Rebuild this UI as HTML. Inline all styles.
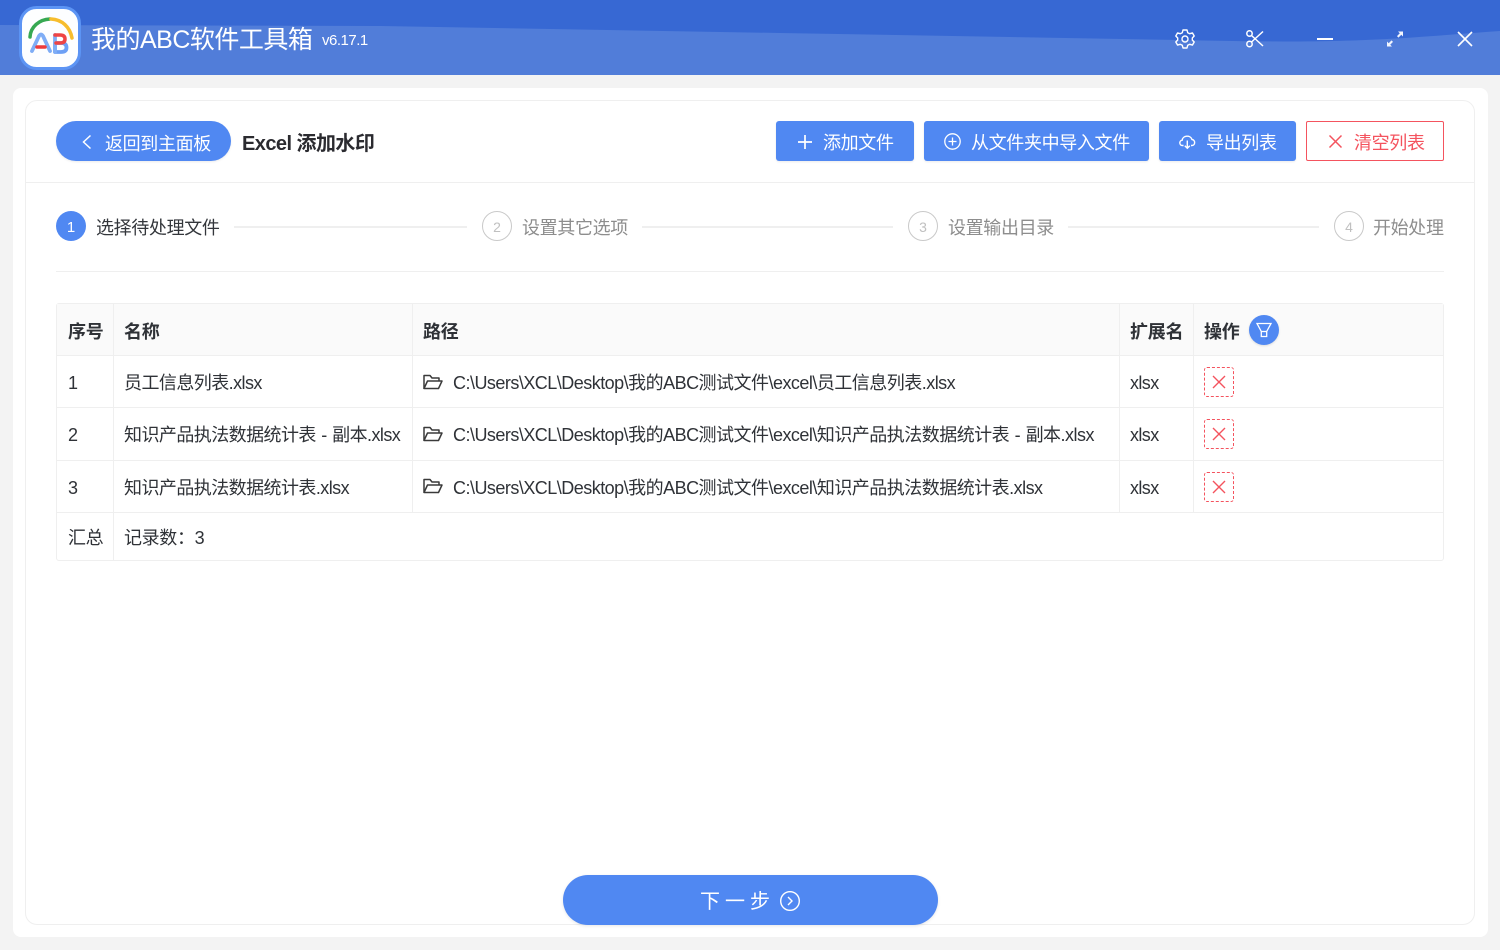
<!DOCTYPE html>
<html lang="zh">
<head>
<meta charset="utf-8">
<title>我的ABC软件工具箱</title>
<style>
html,body{margin:0;padding:0;width:1500px;height:950px;overflow:hidden;background:#f3f3f3}
*{box-sizing:border-box}
body{font-family:"Liberation Sans","Noto Sans CJK SC",sans-serif;color:#2f3237;position:relative}
.a{position:absolute;white-space:nowrap}
.t{font-size:18px;line-height:24px;letter-spacing:-.35px;font-weight:400}
.p{letter-spacing:-.52px}
.n{letter-spacing:-.56px}
.x{letter-spacing:-.6px}
.w{word-spacing:1px}
.btn{position:absolute;top:121px;height:40px;background:#5088f2;border-radius:3px;color:#fff;box-shadow:0 1px 2px rgba(0,0,0,.08)}
.btn span{position:absolute;top:10px;font-size:18px;line-height:24px;letter-spacing:-.35px;white-space:nowrap}
.line{position:absolute;background:#efefef}
.circ{position:absolute;top:211px;width:30px;height:30px;border-radius:50%;border:1px solid #c9c9c9;color:#c0c0c0;font-size:14px;line-height:31px;text-align:center}
.gray{color:#8d8d8d}
.b{font-weight:700;letter-spacing:-.2px}
.del{position:absolute;left:1204px;width:30px;height:30px;border:1px dashed #f4535e;border-radius:3px}
.del svg{position:absolute;left:6px;top:6px}
</style>
</head>
<body>
<!-- header -->
<svg class="a" style="left:0;top:0" width="1500" height="75" viewBox="0 0 1500 75">
<rect width="1500" height="75" fill="#517dd9"/>
<path d="M0 0H1500V31C1440 35 1390 41 1300 41.500C1260 41.500 1220 41 1180 40L780 33L380 26L0 25Z" fill="#3768d3"/>
</svg>
<!-- logo -->
<svg class="a" style="left:19px;top:6px" width="62" height="64" viewBox="0 0 62 64" fill="none">
<rect x="1.500" y="1.500" width="59" height="61" rx="16" fill="#fdfeff" stroke="#5c94f4" stroke-width="3"/>
<path d="M11 31C11.500 21 20 13.500 31 13" stroke="#36a852" stroke-width="3.500" stroke-linecap="round"/>
<path d="M32 13C43 13.500 51 21 53 32" stroke="#f7bd2d" stroke-width="3.500" stroke-linecap="round"/>
<path d="M13 45L20 30Q22 27 24 30L31 45" stroke="#7fadf6" stroke-width="3.800" stroke-linecap="round"/>
<path d="M18 41H26" stroke="#ee3b3b" stroke-width="3.500" stroke-linecap="round"/>
<path d="M36 37H42Q47.500 37 47.500 41.500Q47.500 46 42 46H36Z" stroke="#6da0f5" stroke-width="3.800" stroke-linejoin="round"/>
<path d="M36 29V46" stroke="#7fadf6" stroke-width="3.800" stroke-linecap="round"/>
<path d="M36 29H41Q46 29 46 33Q46 37 41 37H37" stroke="#ef4444" stroke-width="3.500" stroke-linecap="round"/>
</svg>
<div class="a" style="left:91px;top:23px;font-size:25px;line-height:34px;color:#fff;letter-spacing:-.5px">我的ABC软件工具箱</div>
<div class="a" style="left:322px;top:31px;font-size:15px;line-height:20px;color:#fff;letter-spacing:-.5px">v6.17.1</div>
<!-- window icons -->
<svg class="a" style="left:1174px;top:28px" width="22" height="22" viewBox="0 0 22 22" fill="none" stroke="#fff" stroke-width="1.400" stroke-linejoin="round">
<path d="M9 2H13L13.700 4.700L15.800 5.700L18.400 4.900L20.200 8L18.300 10L18.300 12L20.200 14L18.400 17.100L15.800 16.300L13.700 17.300L13 20H9L8.300 17.300L6.200 16.300L3.600 17.100L1.800 14L3.700 12L3.700 10L1.800 8L3.600 4.900L6.200 5.700L8.300 4.700Z"/>
<circle cx="11" cy="11" r="3"/>
</svg>
<svg class="a" style="left:1245px;top:29px" width="20" height="20" viewBox="0 0 20 20" fill="none" stroke="#fff" stroke-width="1.500">
<circle cx="4.500" cy="4.500" r="2.700"/><circle cx="4.500" cy="15" r="2.700"/>
<path d="M6.500 6.500L18 17M6.500 13L18 2.500"/>
</svg>
<div class="a" style="left:1317px;top:38px;width:16px;height:2px;background:#fff"></div>
<svg class="a" style="left:1386px;top:30px" width="18" height="18" viewBox="0 0 18 18" fill="#f2f5fd">
<path d="M12 1.500H17V6.500L15.300 4.800L12.500 7.600L11 6.100L13.800 3.300Z"/>
<path d="M1 16.500V11.500L2.700 13.200L5.500 10.400L7 11.900L4.200 14.700L6 16.500Z"/>
</svg>
<svg class="a" style="left:1457px;top:31px" width="16" height="16" viewBox="0 0 16 16" stroke="#fff" stroke-width="1.600"><path d="M1 1L15 15M15 1L1 15"/></svg>

<!-- outer panel -->
<div class="a" style="left:13px;top:88px;width:1475px;height:849px;background:#fff;border-radius:8px"></div>
<div class="a" style="left:25px;top:100px;width:1450px;height:825px;background:#fff;border:1px solid #efefef;border-radius:12px"></div>
<div class="line" style="left:26px;top:182px;width:1448px;height:1px"></div>
<div class="line" style="left:56px;top:271px;width:1388px;height:1px"></div>

<!-- back -->
<div class="a" style="left:56px;top:121px;width:175px;height:40px;border-radius:20px;background:#5088f2;box-shadow:0 1px 2px rgba(0,0,0,.08)"></div>
<svg class="a" style="left:80px;top:134px" width="14" height="16" viewBox="0 0 14 16" fill="none" stroke="#fff" stroke-width="1.500"><path d="M10.500 1.500L3.500 8L10.500 14.500"/></svg>
<div class="a t" style="left:105px;top:132px;color:#fff">返回到主面板</div>
<div class="a" style="left:242px;top:131px;font-size:20px;line-height:26px;font-weight:700;color:#2b2b30;letter-spacing:-.55px">Excel 添加水印</div>

<!-- buttons -->
<div class="btn" style="left:776px;width:138px">
<svg class="a" style="left:21px;top:13px" width="16" height="16" viewBox="0 0 16 16" stroke="#fff" stroke-width="1.700"><path d="M8 1V15M1 8H15"/></svg>
<span style="left:47px">添加文件</span></div>
<div class="btn" style="left:924px;width:225px">
<svg class="a" style="left:19px;top:11px" width="19" height="19" viewBox="0 0 19 19" fill="none" stroke="#fff" stroke-width="1.300"><circle cx="9.500" cy="9.500" r="7.700"/><path d="M9.500 5.500V13.500M5.500 9.500H13.500"/></svg>
<span style="left:47px">从文件夹中导入文件</span></div>
<div class="btn" style="left:1159px;width:137px">
<svg class="a" style="left:19px;top:12px" width="19" height="17" viewBox="0 0 19 17" fill="none" stroke="#fff" stroke-width="1.400"><path d="M5.500 12.500H4.500C1 12.500 1 7.500 4.200 7.200C4.500 2.500 12.500 1.500 14 6.500C17.500 6.800 17.500 12.500 14 12.500H13"/><path d="M9.300 7.500V15M6.800 12.700L9.300 15.200L11.800 12.700"/></svg>
<span style="left:47px">导出列表</span></div>
<div class="a" style="left:1306px;top:121px;width:138px;height:40px;border:1px solid #f4535e;border-radius:2px">
<svg class="a" style="left:21px;top:12px" width="15" height="15" viewBox="0 0 15 15" stroke="#f4535e" stroke-width="1.500"><path d="M1.500 1.500L13.500 13.500M13.500 1.500L1.500 13.500"/></svg>
<div class="a t" style="left:47px;top:9px;color:#f4535e">清空列表</div></div>

<!-- steps -->
<div class="a" style="left:56px;top:211px;width:30px;height:30px;border-radius:50%;background:#5088f2;color:#fff;font-size:15px;line-height:33px;text-align:center">1</div>
<div class="a t" style="left:96px;top:215px;color:#33363b;line-height:26px">选择待处理文件</div>
<div class="line" style="left:234px;top:226px;width:233px;height:2px"></div>
<div class="circ" style="left:482px">2</div>
<div class="a t gray" style="left:522px;top:215px;line-height:26px">设置其它选项</div>
<div class="line" style="left:642px;top:226px;width:251px;height:2px"></div>
<div class="circ" style="left:908px">3</div>
<div class="a t gray" style="left:948px;top:215px;line-height:26px">设置输出目录</div>
<div class="line" style="left:1068px;top:226px;width:251px;height:2px"></div>
<div class="circ" style="left:1334px">4</div>
<div class="a t gray" style="left:1373px;top:215px;line-height:26px">开始处理</div>

<!-- table -->
<div class="a" style="left:56px;top:303px;width:1388px;height:258px;border:1px solid #efefef;border-radius:3px"></div>
<div class="a" style="left:57px;top:304px;width:1386px;height:51px;background:#fafafa"></div>
<div class="line" style="left:57px;top:355px;width:1386px;height:1px"></div>
<div class="line" style="left:57px;top:407px;width:1386px;height:1px"></div>
<div class="line" style="left:57px;top:460px;width:1386px;height:1px"></div>
<div class="line" style="left:57px;top:512px;width:1386px;height:1px"></div>
<div class="line" style="left:113px;top:304px;width:1px;height:256px"></div>
<div class="line" style="left:412px;top:304px;width:1px;height:208px"></div>
<div class="line" style="left:1119px;top:304px;width:1px;height:208px"></div>
<div class="line" style="left:1193px;top:304px;width:1px;height:208px"></div>

<div class="a t b" style="left:68px;top:320px">序号</div>
<div class="a t b" style="left:124px;top:320px">名称</div>
<div class="a t b" style="left:423px;top:320px">路径</div>
<div class="a t b" style="left:1130px;top:320px">扩展名</div>
<div class="a t b" style="left:1204px;top:320px">操作</div>
<div class="a" style="left:1249px;top:315px;width:30px;height:30px;border-radius:50%;background:#5088f2;box-shadow:0 1px 2px rgba(0,0,0,.12)">
<svg class="a" style="left:6px;top:6px" width="18" height="18" viewBox="0 0 18 18" fill="none" stroke="#fff" stroke-width="1.300"><path d="M2 2.500H16L11.700 10.500V15.500H6.300V10.500Z"/><path d="M6.300 10.500H11.700"/></svg></div>

<div class="a t" style="left:68px;top:371px">1</div>
<div class="a t n" style="left:124px;top:371px">员工信息列表.xlsx</div>
<svg class="a" style="left:423px;top:374px" width="20" height="16" viewBox="0 0 20 16" fill="none" stroke="#3a3a3a" stroke-width="1.500" stroke-linejoin="round"><path d="M1 14.500V1.500H7L9 4H16V7"/><path d="M1 14.500H15.500L19 7H4.500Z"/></svg>
<div class="a t p" style="left:453px;top:371px">C:\Users\XCL\Desktop\我的ABC测试文件\excel\员工信息列表.xlsx</div>
<div class="a t x" style="left:1130px;top:371px">xlsx</div>
<div class="del" style="top:367px"><svg width="16" height="16" viewBox="0 0 16 16" stroke="#f4535e" stroke-width="1.400"><path d="M2 2L14 14M14 2L2 14"/></svg></div>

<div class="a t" style="left:68px;top:423px">2</div>
<div class="a t n w" style="left:124px;top:423px">知识产品执法数据统计表 - 副本.xlsx</div>
<svg class="a" style="left:423px;top:426px" width="20" height="16" viewBox="0 0 20 16" fill="none" stroke="#3a3a3a" stroke-width="1.500" stroke-linejoin="round"><path d="M1 14.500V1.500H7L9 4H16V7"/><path d="M1 14.500H15.500L19 7H4.500Z"/></svg>
<div class="a t p w" style="left:453px;top:423px">C:\Users\XCL\Desktop\我的ABC测试文件\excel\知识产品执法数据统计表 - 副本.xlsx</div>
<div class="a t x" style="left:1130px;top:423px">xlsx</div>
<div class="del" style="top:419px"><svg width="16" height="16" viewBox="0 0 16 16" stroke="#f4535e" stroke-width="1.400"><path d="M2 2L14 14M14 2L2 14"/></svg></div>

<div class="a t" style="left:68px;top:476px">3</div>
<div class="a t n" style="left:124px;top:476px">知识产品执法数据统计表.xlsx</div>
<svg class="a" style="left:423px;top:478px" width="20" height="16" viewBox="0 0 20 16" fill="none" stroke="#3a3a3a" stroke-width="1.500" stroke-linejoin="round"><path d="M1 14.500V1.500H7L9 4H16V7"/><path d="M1 14.500H15.500L19 7H4.500Z"/></svg>
<div class="a t p" style="left:453px;top:476px">C:\Users\XCL\Desktop\我的ABC测试文件\excel\知识产品执法数据统计表.xlsx</div>
<div class="a t x" style="left:1130px;top:476px">xlsx</div>
<div class="del" style="top:472px"><svg width="16" height="16" viewBox="0 0 16 16" stroke="#f4535e" stroke-width="1.400"><path d="M2 2L14 14M14 2L2 14"/></svg></div>

<div class="a t" style="left:68px;top:526px">汇总</div>
<div class="a t" style="left:124px;top:526px">记录数：3</div>

<!-- next -->
<div class="a" style="left:563px;top:875px;width:375px;height:50px;border-radius:25px;background:#5088f2;box-shadow:0 1px 3px rgba(0,0,0,.1)"></div>
<div class="a" style="left:700px;top:889px;font-size:20px;line-height:26px;color:#fff;letter-spacing:5px">下一步</div>
<svg class="a" style="left:779px;top:890px" width="22" height="22" viewBox="0 0 22 22" fill="none" stroke="#fff" stroke-width="1.400"><circle cx="11" cy="11" r="9.300"/><path d="M9 7L13 11L9 15"/></svg>
</body>
</html>
